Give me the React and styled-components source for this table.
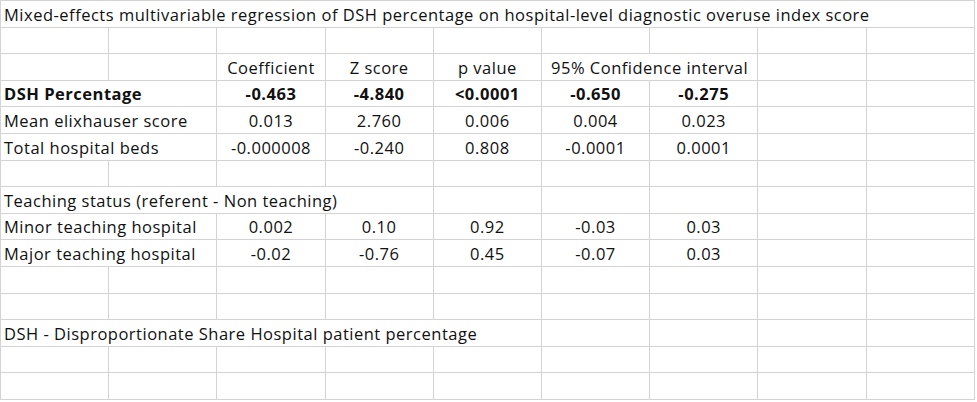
import styled, { createGlobalStyle } from "styled-components";

const GlobalStyle = createGlobalStyle`
  body {
    margin: 0;
    background: #ffffff;
    font-family: "Open Sans", Lato, sans-serif;
    color: #111111;
  }
`;

const rows = [
  [{ text: "Mixed-effects multivariable regression of DSH percentage on hospital-level diagnostic overuse index score", span: 9 }],
  [],
  [{}, {}, { text: "Coefficient", center: true }, { text: "Z score", center: true }, { text: "p value", center: true }, { text: "95% Confidence interval", span: 2, center: true }],
  [{ text: "DSH Percentage", span: 2, bold: true }, "-0.463", "-4.840", "<0.0001", "-0.650", "-0.275"],
  [{ text: "Mean elixhauser score", span: 2 }, "0.013", "2.760", "0.006", "0.004", "0.023"],
  [{ text: "Total hospital beds", span: 2 }, "-0.000008", "-0.240", "0.808", "-0.0001", "0.0001"],
  [],
  [{ text: "Teaching status (referent - Non teaching)", span: 4 }],
  [{ text: "Minor teaching hospital", span: 2 }, "0.002", "0.10", "0.92", "-0.03", "0.03"],
  [{ text: "Major teaching hospital", span: 2 }, "-0.02", "-0.76", "0.45", "-0.07", "0.03"],
  [],
  [],
  [{ text: "DSH - Disproportionate Share Hospital patient percentage", span: 5 }],
  [],
  [],
];

// expand every row to 9 grid cells, padding the tail with empties
const buildRow = (row, rowIndex) => {
  const bold = row[0] && row[0].bold;
  const cells = row.map(c => (typeof c === "string" ? { text: c, center: true, bold } : c));
  let used = cells.reduce((n, c) => n + (c.span || 1), 0);
  while (used < 9) {
    cells.push({});
    used++;
  }
  return cells.map((c, i) => (
    <Cell key={rowIndex + "-" + i} $span={c.span || 1} $center={c.center} $bold={c.bold}>
      {c.text}
    </Cell>
  ));
};

const App = () => {
  return (
    <>
      <GlobalStyle />
      <Sheet>{rows.map(buildRow)}</Sheet>
    </>
  );
};

export default App;

/* ---------------------------- STYLED COMPONENTS --------------------------- */

const Sheet = styled.div`
  display: grid;
  grid-template-columns: repeat(9, 107.2px);
  grid-auto-rows: 25.6px;
  gap: 1px;
  padding: 1px;
  width: max-content;
  background: #d3d3d3;
`;

const Cell = styled.div`
  grid-column: span ${p => p.$span};
  background: #ffffff;
  display: flex;
  align-items: flex-end;
  justify-content: ${p => (p.$center ? "center" : "flex-start")};
  padding: 0 3px 3px;
  font-size: 16.5px;
  line-height: 18px;
  letter-spacing: 0.5px;
  font-weight: ${p => (p.$bold ? 700 : 400)};
  white-space: nowrap;
  overflow: visible;
`;
